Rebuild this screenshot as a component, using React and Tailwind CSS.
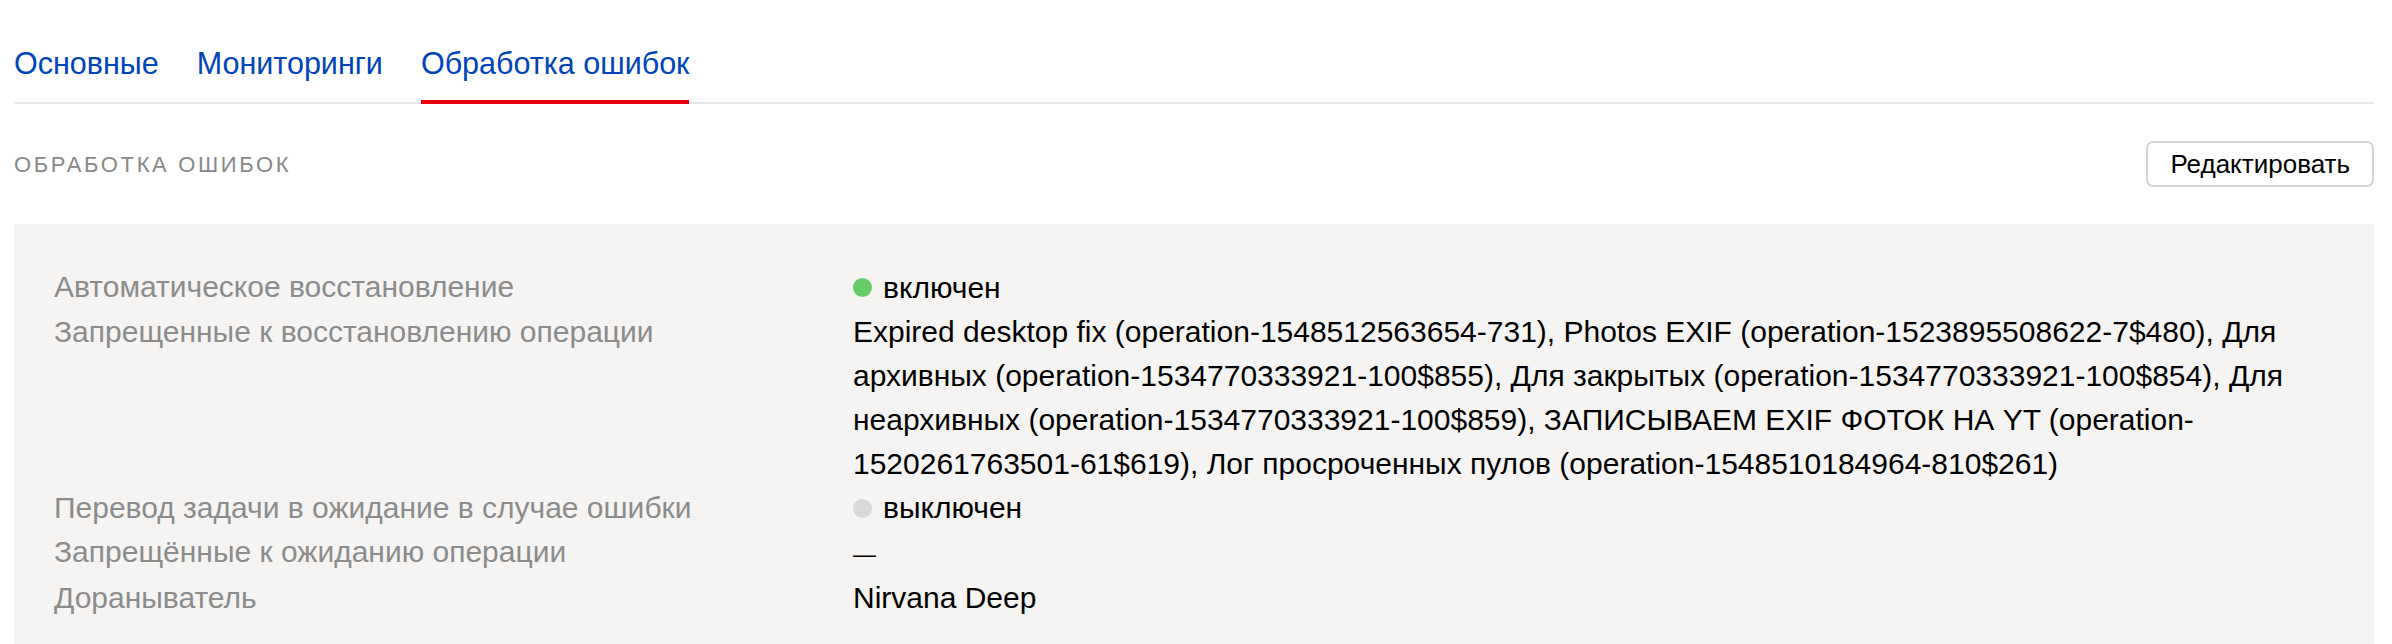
import React from "react";

const tabs = [
  { id: "main", title: "Основные" },
  { id: "monitorings", title: "Мониторинги" },
  { id: "errors", title: "Обработка ошибок" },
];

function StatusDot({ on }) {
  return (
    <span
      className={
        "inline-block w-[19px] h-[19px] rounded-full mr-[11px] shrink-0 " +
        (on ? "bg-[#66cc66]" : "bg-[#d9d9d9]")
      }
    />
  );
}

function Row({ label, children }) {
  return (
    <>
      <dt className="text-[#8c8c8c]">{label}</dt>
      <dd className="text-black">{children}</dd>
    </>
  );
}

export default function App() {
  const active = "errors";

  return (
    <div className="bg-white pl-[14px] pr-[18px] font-['Liberation_Sans',Arial,sans-serif]">
      <div className="flex gap-[38px] pt-[45px] border-b-2 border-[#e6e6e6]">
        {tabs.map((tab) => (
          <a
            key={tab.id}
            href="#"
            className={
              "text-[30.5px] leading-[36px] pb-[19px] -mb-[2px] border-b-4 text-[#0044bb] " +
              (tab.id === active ? "border-[#e8000f]" : "border-transparent")
            }
          >
            {tab.title}
          </a>
        ))}
      </div>

      <div className="flex items-center justify-between py-[37px]">
        <h2 className="text-[22px] uppercase tracking-[0.12em] text-[#888]">Обработка ошибок</h2>
        <button className="h-[46px] px-[22px] border-2 border-[#d4d4d4] rounded-[7px] bg-white text-[26px] text-black">
          Редактировать
        </button>
      </div>

      <dl className="bg-[#f5f4f2] px-10 pt-[41px] pb-10 grid grid-cols-[799px_1fr] text-[30px] leading-[44px]">
        <Row label="Автоматическое восстановление">
          <span className="inline-flex items-center">
            <StatusDot on />
            включен
          </span>
        </Row>
        <Row label="Запрещенные к восстановлению операции">
          Expired desktop fix (operation-1548512563654-731), Photos EXIF (operation-1523895508622-7$480), Для
          архивных (operation-1534770333921-100$855), Для закрытых (operation-1534770333921-100$854), Для
          неархивных (operation-1534770333921-100$859), ЗАПИСЫВАЕМ EXIF ФОТОК НА YT (operation-<wbr />
          1520261763501-61$619), Лог просроченных пулов (operation-1548510184964-810$261)
        </Row>
        <Row label="Перевод задачи в ожидание в случае ошибки">
          <span className="inline-flex items-center">
            <StatusDot />
            выключен
          </span>
        </Row>
        <Row label="Запрещённые к ожиданию операции">
          <span className="text-[23px]">—</span>
        </Row>
        <Row label="Дораныватель">Nirvana Deep</Row>
      </dl>
    </div>
  );
}
